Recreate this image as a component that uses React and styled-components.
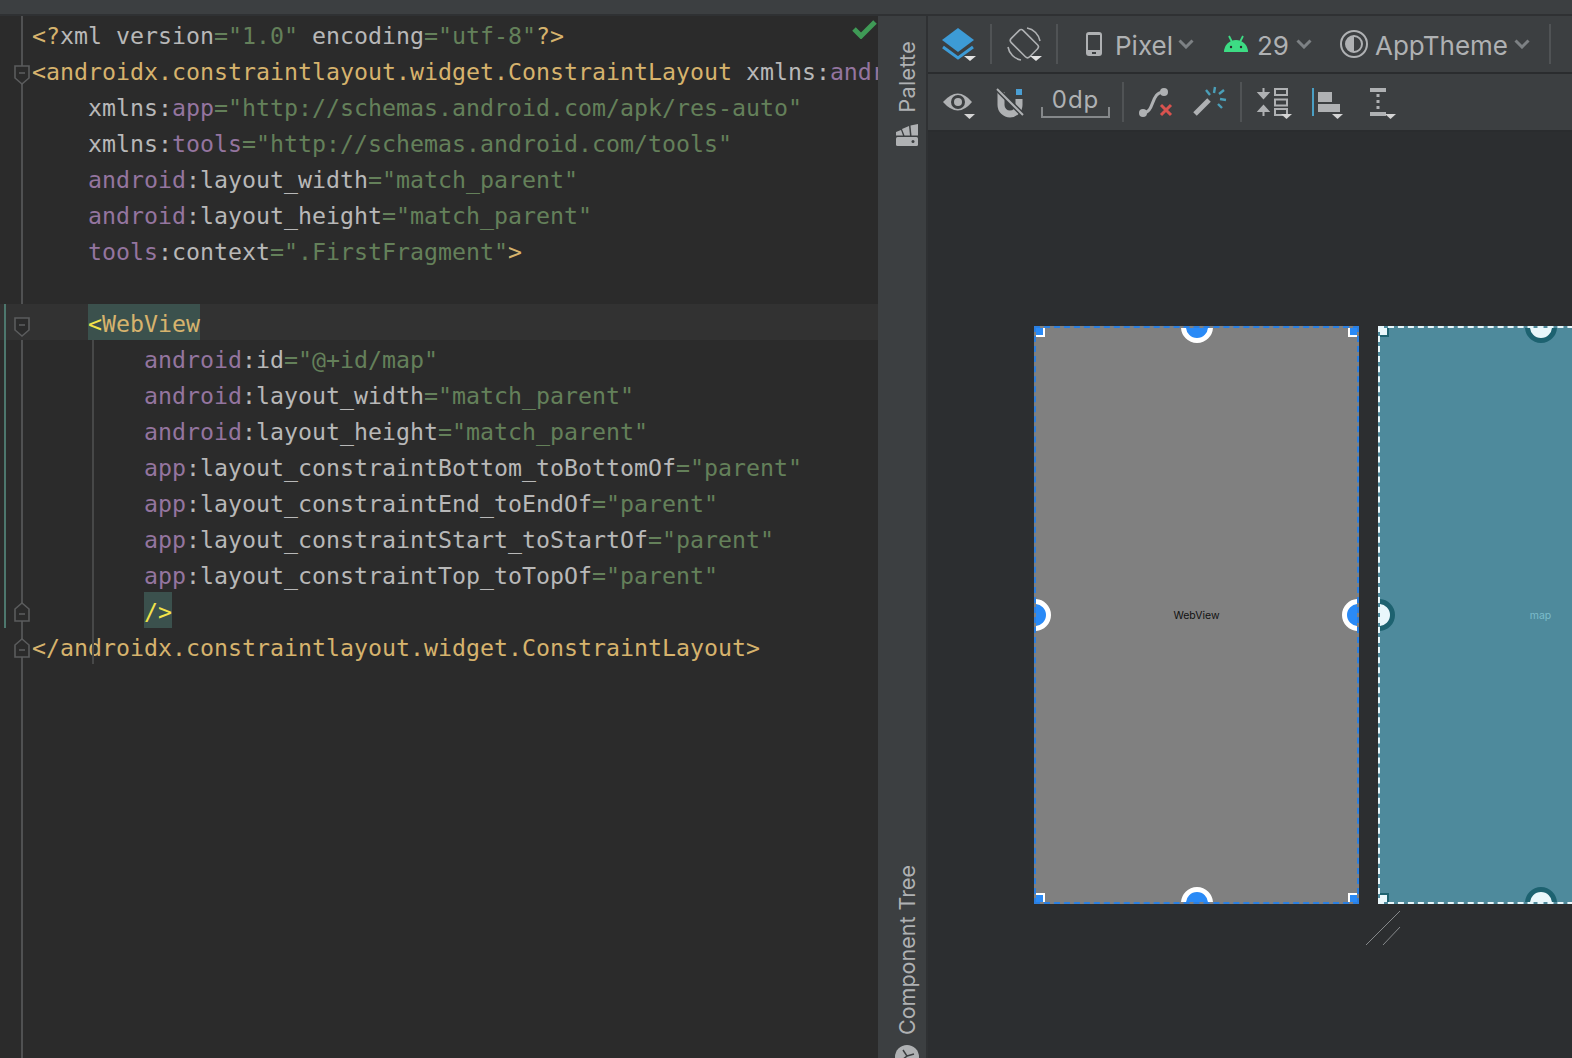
import React from 'react'
import styled, { createGlobalStyle } from 'styled-components'

const GlobalStyle = createGlobalStyle`
  html, body {
    margin: 0;
    padding: 0;
    height: 1058px;
    overflow: hidden;
    background: #2b2b2b;
  }
  #root { height: 1058px; }
`

const grey = '#afb1b3'
const barBg = '#3c3f41'

const Window = styled.div`
  width: 1572px;
  height: 1058px;
  display: flex;
  flex-direction: column;
  overflow: hidden;
`
const TopStrip = styled.div`
  height: 14px;
  flex: none;
  background: ${barBg};
  border-bottom: 2px solid #2f3133;
`
const Main = styled.div`
  flex: 1;
  display: flex;
  min-height: 0;
`

/* editor */
const Editor = styled.div`
  width: 878px;
  flex: none;
  position: relative;
  overflow: hidden;
  background: #2b2b2b;
  font-family: "DejaVu Sans Mono", monospace;
  font-size: 23.25px;
  line-height: 40px;
  color: #b8b8b8;
  font-variant-ligatures: none;

  &::before {
    content: "";
    position: absolute;
    left: 21px;
    top: 0;
    bottom: 0;
    width: 2px;
    background: #505152;
  }
`
const Line = styled.div`
  height: 36px;
  display: flex;
  position: relative;
  white-space: pre;
  background: ${p => (p.$caret ? '#323232' : 'transparent')};
  ${p => p.$guide && `
    &::after {
      content: "";
      position: absolute;
      left: 92px;
      top: 0;
      bottom: 0;
      width: 2px;
      background: #474848;
    }
  `}
`
const Gutter = styled.div`
  width: 32px;
  flex: none;
  position: relative;
  box-sizing: border-box;
  ${p => p.$changed && `
    &::before {
      content: "";
      position: absolute;
      left: 4px;
      top: 0;
      bottom: 0;
      width: 2px;
      background: #4d776d;
    }
  `}
`
const FoldIcon = styled.svg`
  position: absolute;
  left: 13px;
  top: ${p => p.$top}px;
  width: 18px;
  height: 22px;
`
const Tag = styled.span`color: #d6b36d;`
const Attr = styled.span`color: #94759f;`
const Str = styled.span`color: #64805a;`
const Match = styled.span`
  display: inline-block;
  height: 36px;
  background: #3b514d;
  color: #d6b36d;
`
const Bright = styled.span`color: #f2e34a;`
const CheckMark = styled.svg`
  position: absolute;
  right: 0;
  top: 3px;
  width: 26px;
  height: 20px;
`

/* tool window strip */
const Strip = styled.div`
  width: 50px;
  flex: none;
  height: 1042px;
  background: ${barBg};
  border-right: 2px solid #2f3133;
  box-sizing: border-box;
  padding-left: 10px;
  display: flex;
  flex-direction: column;
  justify-content: space-between;
  align-items: center;
  overflow: hidden;
  font-family: Inter, "Noto Sans", sans-serif;
  color: ${grey};
  font-size: 21.5px;
`
const StripGroup = styled.div`
  display: flex;
  flex-direction: column;
  align-items: center;
  gap: ${p => p.$gap}px;
  padding-top: ${p => p.$top || 0}px;
  margin-bottom: ${p => p.$bottom || 0}px;
`
const StripLabel = styled.div`
  writing-mode: vertical-rl;
  transform: rotate(180deg);
  white-space: nowrap;
  line-height: 28px;
  letter-spacing: ${p => p.$spacing || 0}px;
`

/* design surface */
const Design = styled.div`
  flex: 1;
  min-width: 0;
  display: flex;
  flex-direction: column;
  background: #2c2e30;
`
const Bar = styled.div`
  height: 56px;
  flex: none;
  display: flex;
  align-items: center;
  padding-left: 10px;
  background: ${barBg};
  border-bottom: 2px solid #2a2c2e;
  font-family: Inter, "Noto Sans", sans-serif;
  color: ${grey};
`
const Slot = styled.div`
  width: ${p => p.$w || 40}px;
  height: 40px;
  flex: none;
  margin-left: ${p => p.$m || 0}px;
  display: flex;
  align-items: center;
  justify-content: center;
  svg { display: block; }
`
const Sep = styled.div`
  width: 2px;
  height: 40px;
  flex: none;
  margin-left: ${p => p.$m}px;
  background: #505355;
`
const BarText = styled.span`
  width: ${p => p.$w}px;
  flex: none;
  margin-left: ${p => p.$m}px;
  padding-top: 3px;
  font-size: 26px;
  line-height: 32px;
  white-space: nowrap;
`
const DpField = styled.div`
  width: 69px;
  height: 32px;
  margin: 0 0 0 11px;
  box-sizing: border-box;
  flex: none;
  position: relative;
  text-align: center;
  font-size: 24px;
  line-height: 28px;
  letter-spacing: 1px;
  border-bottom: 2px solid #85888a;

  &::before, &::after {
    content: "";
    position: absolute;
    bottom: -2px;
    width: 2px;
    height: 11px;
    background: #85888a;
  }
  &::before { left: 0; }
  &::after { right: 0; }
`
const Canvas = styled.div`
  flex: 1;
  min-height: 0;
  display: flex;
  gap: 19px;
  padding: 194px 0 0 106px;
  position: relative;
  overflow: hidden;
`
const Screen = styled.div`
  width: 325px;
  height: 578px;
  flex: none;
  box-sizing: border-box;
  position: relative;
  overflow: hidden;
  display: flex;
  align-items: center;
  justify-content: center;
  font-family: Inter, "Liberation Sans", sans-serif;
  font-size: 10.5px;
  background: ${p => (p.$teal ? '#4e8a9c' : '#808080')};
  color: ${p => (p.$teal ? '#7bbccb' : '#111')};
  border: 2px dashed ${p => (p.$teal ? '#e9f7fb' : '#2b7fe0')};
`
const Handle = styled.div`
  position: absolute;
  width: 32px;
  height: 32px;
  box-sizing: border-box;
  border-radius: 50%;
  border: 5px solid ${p => (p.$teal ? '#1d6270' : '#fff')};
  background: ${p => (p.$teal ? '#e9f7fb' : '#2a8af6')};
  ${p => p.$at === 'top' && 'top: -17px; left: calc(50% - 16px);'}
  ${p => p.$at === 'bottom' && 'bottom: -17px; left: calc(50% - 16px);'}
  ${p => p.$at === 'left' && 'left: -17px; top: calc(50% - 16px);'}
  ${p => p.$at === 'right' && 'right: -17px; top: calc(50% - 16px);'}
`
const Corner = styled.div`
  position: absolute;
  width: 10px;
  height: 10px;
  box-sizing: border-box;
  background: ${p => (p.$teal ? '#e9f7fb' : '#2a8af6')};
  ${p => {
    const line = `2px solid ${p.$teal ? '#1d6270' : '#fff'}`
    return `
      ${p.$y}: -1px;
      ${p.$x}: -1px;
      border-${p.$y === 'top' ? 'bottom' : 'top'}: ${line};
      border-${p.$x === 'left' ? 'right' : 'left'}: ${line};
    `
  }}
`
const ResizeMark = styled.svg`
  position: absolute;
  left: 437px;
  top: 778px;
  width: 36px;
  height: 36px;
`

const Tri = ({ x }) => <polygon points={`${x},32 ${x + 11},32 ${x + 5.5},37`} fill="#d4d4d4" />

const LayersIcon = () => (
  <svg width="40" height="40" viewBox="0 0 40 40">
    <polygon points="20,4 36,16 20,28 4,16" fill="#3d9bd6" />
    <polyline points="5,23 20,34 35,23" fill="none" stroke="#3d9bd6" strokeWidth="3" />
    <polygon points="26,32 38,32 32,37" fill="#e2e2e2" />
  </svg>
)
const RotateIcon = () => (
  <svg width="40" height="40" viewBox="0 0 40 40" fill="none" stroke={grey} strokeWidth="1.6">
    <rect x="12" y="7" width="17" height="26" rx="3" transform="rotate(-45 20 20)" />
    <path d="M23 4 A16 16 0 0 1 36 17" />
    <path d="M17 36 A16 16 0 0 1 4 23" />
    <polygon points="26,32 38,32 32,37" fill="#e2e2e2" stroke="none" />
  </svg>
)
const PhoneIcon = () => (
  <svg width="16" height="24" viewBox="0 0 16 24">
    <rect width="16" height="24" rx="3" fill={grey} />
    <rect x="2" y="3" width="12" height="15" fill={barBg} />
    <rect x="6" y="20" width="4" height="2" fill={barBg} />
  </svg>
)
const Chevron = () => (
  <svg width="16" height="10" viewBox="0 0 16 10" fill="none" stroke="#7d8184" strokeWidth="3">
    <polyline points="1.5,1.5 8,8 14.5,1.5" />
  </svg>
)
const AndroidIcon = () => (
  <svg width="24" height="18" viewBox="0 0 24 18">
    <path d="M0 17 A12 12 0 0 1 24 17 Z" fill="#3ddc84" />
    <path d="M5 1 L8 7 M19 1 L16 7" stroke="#3ddc84" strokeWidth="1.8" />
    <circle cx="7" cy="12" r="1.2" fill="#2b2b2b" />
    <circle cx="17" cy="12" r="1.2" fill="#2b2b2b" />
  </svg>
)
const ThemeIcon = () => (
  <svg width="30" height="30" viewBox="0 0 30 30" fill="none" stroke={grey} strokeWidth="2">
    <circle cx="15" cy="15" r="13" />
    <circle cx="15" cy="15" r="8" />
    <path d="M15 7 A8 8 0 0 0 15 23 Z" fill={grey} stroke="none" />
  </svg>
)
const EyeIcon = () => (
  <svg width="40" height="40" viewBox="0 0 40 40">
    <path d="M5 20 Q20 3 34 20 Q20 37 5 20 Z" fill={grey} />
    <circle cx="20" cy="20" r="7" fill={barBg} />
    <circle cx="20" cy="20" r="4" fill={grey} />
    <Tri x={26} />
  </svg>
)
const MagnetIcon = () => (
  <svg width="40" height="40" viewBox="0 0 40 40" fill="none">
    <path d="M11 10 V23 A9 9 0 0 0 29 23 V17" stroke={grey} strokeWidth="7" />
    <path d="M6 6 L34 34" stroke={barBg} strokeWidth="5" />
    <path d="M7 7 L33 33" stroke={grey} strokeWidth="2" />
    <rect x="26" y="7" width="6" height="6" fill="#4a9fd4" />
  </svg>
)
const PathIcon = () => (
  <svg width="40" height="40" viewBox="0 0 40 40" fill="none">
    <path d="M7 31 C19 31 14 10 28 10" stroke={grey} strokeWidth="3" />
    <circle cx="7" cy="31" r="4" fill={grey} />
    <circle cx="28" cy="10" r="4" fill={grey} />
    <path d="M25 23 L35 33 M35 23 L25 33" stroke="#d9534f" strokeWidth="3" />
  </svg>
)
const WandIcon = () => (
  <svg width="40" height="40" viewBox="0 0 40 40" fill="none">
    <path d="M7 32 L21 18" stroke={grey} strokeWidth="5" />
    <path d="M18 8 L22 13 M27 5 L26 11 M36 8 L31 12 M38 18 L32 17 M34 26 L30 22" stroke="#4a9fb8" strokeWidth="2.4" />
  </svg>
)
const PackIcon = () => (
  <svg width="40" height="40" viewBox="0 0 40 40">
    <path d="M8.5 6 V12 M4 11 L8.5 16 L13 11 H4 Z" fill={grey} stroke={grey} strokeWidth="2" />
    <path d="M8.5 34 V28 M4 29 L8.5 24 L13 29 H4 Z" fill={grey} stroke={grey} strokeWidth="2" />
    <g fill="none" stroke={grey} strokeWidth="2">
      <rect x="20" y="7" width="12" height="6" />
      <rect x="20" y="17.5" width="12" height="6" />
      <rect x="20" y="27" width="12" height="6" />
    </g>
    <Tri x={26} />
  </svg>
)
const AlignIcon = () => (
  <svg width="40" height="40" viewBox="0 0 40 40">
    <rect x="4" y="6" width="2" height="28" fill="#4a9fc4" />
    <rect x="10" y="10" width="14" height="10" fill={grey} />
    <rect x="10" y="22" width="22" height="8" fill={grey} />
    <Tri x={24} />
  </svg>
)
const MarginIcon = () => (
  <svg width="40" height="40" viewBox="0 0 40 40">
    <rect x="8" y="6" width="16" height="4" fill={grey} />
    <rect x="8" y="30" width="16" height="4" fill={grey} />
    <path d="M16 12 V28" stroke={grey} strokeWidth="3" strokeDasharray="3 3" />
    <Tri x={23} />
  </svg>
)
const PaletteIcon = () => (
  <svg width="24" height="24" viewBox="0 0 24 24">
    <rect x="1" y="14" width="22" height="9" rx="1.5" fill={grey} />
    <circle cx="18" cy="18.5" r="1.5" fill={barBg} />
    <polygon points="1,12.5 8,12.5 6,7 1,9" fill={grey} />
    <polygon points="9.5,12.5 15,12.5 14,3 7,6" fill={grey} />
    <polygon points="16.5,12.5 23,12.5 23,1 15.5,2.5" fill={grey} />
  </svg>
)
const TreeIcon = () => (
  <svg width="24" height="24" viewBox="0 0 24 24">
    <circle cx="12" cy="12" r="12" fill={grey} />
    <path d="M8 5 L12 11 L7 15 M12 11 L19 9" fill="none" stroke={barBg} strokeWidth="1.5" />
  </svg>
)
const Fold = ({ dir }) => (
  <FoldIcon $top={dir === 'up' ? 9 : 12} viewBox="0 0 18 22" fill="#2b2b2b" stroke="#5b5c5d" strokeWidth="1.6">
    {dir === 'up'
      ? <path d="M2 20 H16 V8 L9 2 L2 8 Z" />
      : <path d="M2 2 H16 V14 L9 20 L2 14 Z" />}
    <path d={dir === 'up' ? 'M6 13 H12' : 'M6 9 H12'} />
  </FoldIcon>
)

const Row = ({ fold, changed, caret, guide, children }) => (
  <Line $caret={caret} $guide={guide}>
    <Gutter $changed={changed}>{fold && <Fold dir={fold} />}</Gutter>
    <div>{children}</div>
  </Line>
)

const Blueprint = ({ teal, label }) => (
  <Screen $teal={teal}>
    <Corner $teal={teal} $x="left" $y="top" />
    <Corner $teal={teal} $x="right" $y="top" />
    <Corner $teal={teal} $x="left" $y="bottom" />
    <Corner $teal={teal} $x="right" $y="bottom" />
    <Handle $teal={teal} $at="top" />
    <Handle $teal={teal} $at="bottom" />
    <Handle $teal={teal} $at="left" />
    <Handle $teal={teal} $at="right" />
    {label}
  </Screen>
)

const S = ({ children }) => <Str>{children}</Str>

const App = () => (
  <Window>
    <GlobalStyle />
    <TopStrip />
    <Main>
      <Editor>
        <CheckMark viewBox="0 0 26 20" fill="none">
          <path d="M2 10 L9 17 L23 3" stroke="#3f9a56" strokeWidth="5" />
        </CheckMark>
        <Row><Tag>{'<?'}</Tag>xml version<S>="1.0"</S> encoding<S>="utf-8"</S><Tag>{'?>'}</Tag></Row>
        <Row fold="down"><Tag>{'<androidx.constraintlayout.widget.ConstraintLayout'}</Tag> xmlns:<Attr>android</Attr><S>="http://schemas.android.com/apk/res/android"</S></Row>
        <Row>{'    '}xmlns:<Attr>app</Attr><S>="http://schemas.android.com/apk/res-auto"</S></Row>
        <Row>{'    '}xmlns:<Attr>tools</Attr><S>="http://schemas.android.com/tools"</S></Row>
        <Row>{'    '}<Attr>android</Attr>:layout_width<S>="match_parent"</S></Row>
        <Row>{'    '}<Attr>android</Attr>:layout_height<S>="match_parent"</S></Row>
        <Row>{'    '}<Attr>tools</Attr>:context<S>=".FirstFragment"</S><Tag>{'>'}</Tag></Row>
        <Row />
        <Row fold="down" changed caret>{'    '}<Match><Bright>{'<'}</Bright>WebView</Match></Row>
        <Row changed guide>{'        '}<Attr>android</Attr>:id<S>="@+id/map"</S></Row>
        <Row changed guide>{'        '}<Attr>android</Attr>:layout_width<S>="match_parent"</S></Row>
        <Row changed guide>{'        '}<Attr>android</Attr>:layout_height<S>="match_parent"</S></Row>
        <Row changed guide>{'        '}<Attr>app</Attr>:layout_constraintBottom_toBottomOf<S>="parent"</S></Row>
        <Row changed guide>{'        '}<Attr>app</Attr>:layout_constraintEnd_toEndOf<S>="parent"</S></Row>
        <Row changed guide>{'        '}<Attr>app</Attr>:layout_constraintStart_toStartOf<S>="parent"</S></Row>
        <Row changed guide>{'        '}<Attr>app</Attr>:layout_constraintTop_toTopOf<S>="parent"</S></Row>
        <Row fold="up" changed guide>{'        '}<Match><Bright>{'/>'}</Bright></Match></Row>
        <Row fold="up" guide><Tag>{'</androidx.constraintlayout.widget.ConstraintLayout>'}</Tag></Row>
      </Editor>

      <Strip>
        <StripGroup $gap={10} $top={25}>
          <StripLabel $spacing={0.3}>Palette</StripLabel>
          <PaletteIcon />
        </StripGroup>
        <StripGroup $gap={10} $bottom={-11}>
          <StripLabel>Component Tree</StripLabel>
          <TreeIcon />
        </StripGroup>
      </Strip>

      <Design>
        <Bar>
          <Slot><LayersIcon /></Slot>
          <Sep $m={12} />
          <Slot $m={12}><RotateIcon /></Slot>
          <Sep $m={12} />
          <Slot $m={24} $w={24}><PhoneIcon /></Slot>
          <BarText $m={9} $w={60}>Pixel</BarText>
          <Slot $m={3} $w={16}><Chevron /></Slot>
          <Slot $m={30} $w={24}><AndroidIcon /></Slot>
          <BarText $m={9} $w={32}>29</BarText>
          <Slot $m={7} $w={16}><Chevron /></Slot>
          <Slot $m={27} $w={30}><ThemeIcon /></Slot>
          <BarText $m={6} $w={135}>AppTheme</BarText>
          <Slot $m={4} $w={16}><Chevron /></Slot>
          <Sep $m={19} />
        </Bar>
        <Bar>
          <Slot><EyeIcon /></Slot>
          <Slot $m={12}><MagnetIcon /></Slot>
          <DpField>0dp</DpField>
          <Sep $m={12} />
          <Slot $m={12}><PathIcon /></Slot>
          <Slot $m={12}><WandIcon /></Slot>
          <Sep $m={12} />
          <Slot $m={13}><PackIcon /></Slot>
          <Slot $m={13}><AlignIcon /></Slot>
          <Slot $m={14}><MarginIcon /></Slot>
        </Bar>
        <Canvas>
          <Blueprint label="WebView" />
          <Blueprint teal label="map" />
          <ResizeMark viewBox="0 0 36 36" fill="none" stroke="#85888a" strokeWidth="1">
            <path d="M1 35 L35 1 M18 35 L35 17" />
          </ResizeMark>
        </Canvas>
      </Design>
    </Main>
  </Window>
)

export default App
